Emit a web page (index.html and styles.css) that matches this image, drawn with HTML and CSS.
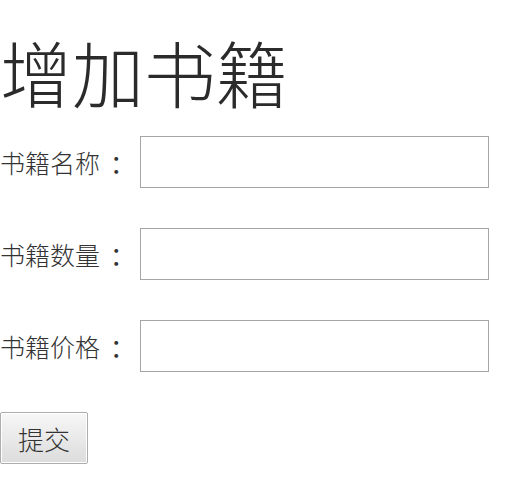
FILE: index.html
```html
<!DOCTYPE html>
<html lang="zh">
<head>
<meta charset="utf-8">
<title>增加书籍</title>
<link rel="stylesheet" href="styles.css">
</head>
<body>
<h1 class="title">增加书籍</h1>
<form class="form">
  <div class="row"><label class="label">书籍名称<span class="colon">：</span></label><input class="field" type="text"></div>
  <div class="row"><label class="label">书籍数量<span class="colon">：</span></label><input class="field" type="text"></div>
  <div class="row"><label class="label">书籍价格<span class="colon">：</span></label><input class="field" type="text"></div>
  <div class="row"><button class="submit" type="button">提交</button></div>
</form>
</body>
</html>
```

FILE: styles.css
```css
html, body {
  margin: 0;
  padding: 0;
  background: #ffffff;
}
body {
  font-family: "Noto Sans CJK SC", "Liberation Serif", serif;
  color: #333333;
}
.title {
  margin: 0;
  padding-top: 29px;
  font-size: 72px;
  font-weight: 300;
  line-height: 84px;
  letter-spacing: 0;
  color: #2b2b2b;
}
.form {
  margin: 0;
  padding-top: 23px;
  display: flex;
  flex-direction: column;
  gap: 40px;
}
.row {
  display: flex;
  align-items: center;
  height: 52px;
}
.label {
  width: 140px;
  flex: none;
  font-size: 25px;
  font-weight: 300;
  color: #333333;
}
.colon {
  display: inline-block;
  padding-left: 10px;
  font-weight: 400;
}
.field {
  box-sizing: border-box;
  width: 349px;
  height: 52px;
  margin: 0;
  border: 1px solid #a6a6a6;
  background: #fff;
  font-size: 20px;
}
.submit {
  box-sizing: border-box;
  width: 88px;
  height: 52px;
  margin: 0;
  padding: 0;
  border: 1px solid #adadad;
  border-radius: 2px;
  background: linear-gradient(#f7f7f7, #dcdcdc);
  box-shadow: inset 0 0 0 1px #ffffff;
  font-family: "Noto Sans CJK SC", sans-serif;
  font-size: 26px;
  font-weight: 300;
  color: #333333;
}
```
